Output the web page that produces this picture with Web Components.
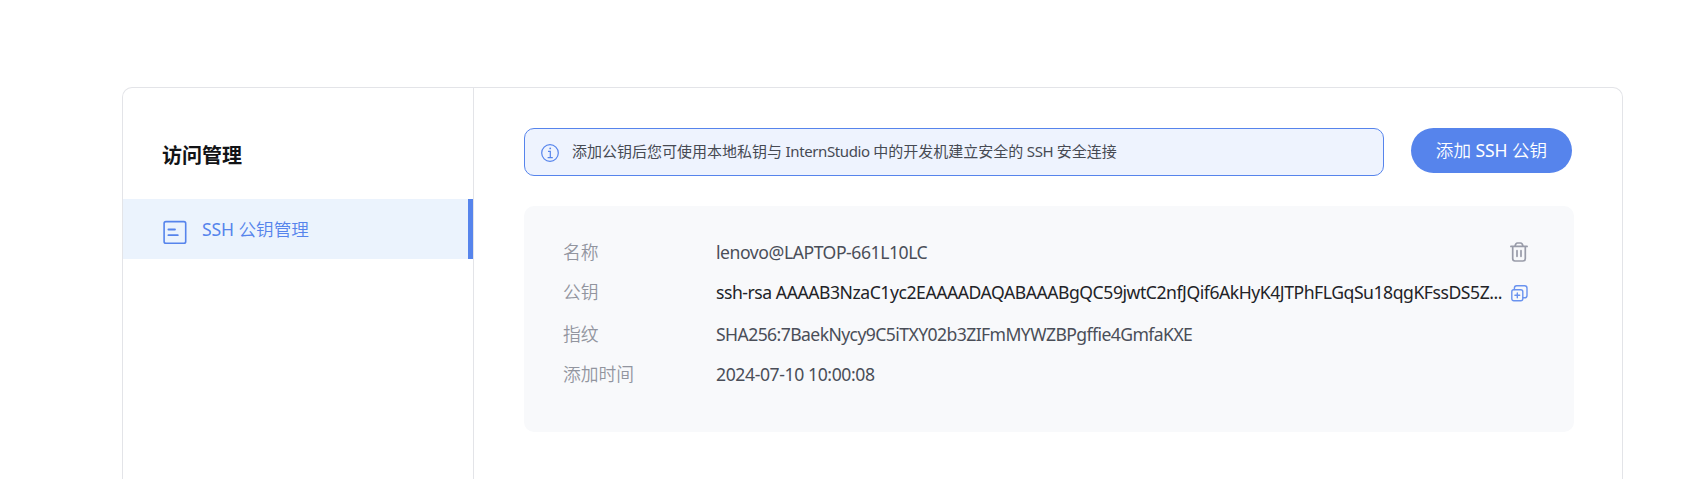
<!DOCTYPE html>
<html lang="zh-CN"><head><meta charset="utf-8"><title>SSH 公钥管理</title>
<style>
html,body{margin:0;height:479px;overflow:hidden;background:#fff}
body{font-family:"Noto Sans","Noto Sans CJK SC",sans-serif;font-size:17.6px;color:#464a53}
</style></head><body>
<access-page></access-page>
<script>
const define=(name,html)=>customElements.define(name,class extends HTMLElement{
  constructor(){super();this.attachShadow({mode:'open'}).innerHTML=html;}
});

define('icon-form',`<style>:host{display:block;width:24px;height:24px}svg{display:block}</style>
<svg width="24" height="24" viewBox="0 0 24 24" fill="none" stroke="#5684ec" stroke-width="1.6"><rect x="1.1" y="1.6" width="21.6" height="21.6" rx="1.8"/><path d="M5.4 9.5h6.6M5.4 15.2h9.4" stroke-width="1.8" stroke-linecap="round"/></svg>`);

define('icon-info',`<style>:host{display:block;width:18px;height:18px}svg{display:block}</style>
<svg width="18" height="18" viewBox="0 0 18 18" fill="none" stroke="#5684ec" stroke-width="1.2"><circle cx="9" cy="9" r="8.3"/><path d="M7 7.3h2.3v6.2M6.6 13.6h5.2"/><circle cx="9.2" cy="4.4" r=".9" fill="#5684ec" stroke="none"/></svg>`);

define('icon-trash',`<style>:host{display:block;width:18px;height:20px}svg{display:block}</style>
<svg width="18" height="20" viewBox="0 0 18 20" fill="none" stroke="#999ca9" stroke-width="1.7" stroke-linecap="round"><path d="M.9 4.4h16.2M5 4.2C5.4 2 6.2 1 7.4 1h3.2c1.2 0 2 1 2.4 3.2M2.7 4.6v12c0 1.5.8 2.4 2.3 2.4h8c1.5 0 2.3-.9 2.3-2.4v-12M7 8.7v5.6M11 8.7v5.6"/></svg>`);

define('icon-copy',`<style>:host{display:block;width:17px;height:17px}svg{display:block}</style>
<svg width="17" height="17" viewBox="0 0 17 17" fill="none" stroke="#6a93ef" stroke-width="1.4" stroke-linecap="round"><rect x=".8" y="4.8" width="11" height="11" rx="2"/><path d="M3.4 4.6V3C3.4 1.6 4.2.8 5.6.8h8c1.6 0 2.4.8 2.4 2.4v7.2c0 1.6-.8 2.4-2.4 2.4H12M6.3 7.9v4.8M3.9 10.3h4.8"/></svg>`);

define('side-nav',`<style>
:host{display:flex;flex-direction:column;width:351px;flex:none;box-sizing:border-box;border-right:1px solid #e3e4e8}
h1{margin:50px 0 0 39px;font-size:20px;line-height:36px;height:36px;font-weight:700;color:#121316}
</style><h1>访问管理</h1><slot></slot>`);

define('nav-item',`<style>
:host{display:flex;align-items:center;margin-top:25px;height:60px;box-sizing:border-box;padding-left:40px;background:#ebf3fd;border-right:5px solid #5684ec;color:#5684ec;font-weight:350}
icon-form{margin:6px 15px 0 0}
span{line-height:26px;white-space:nowrap}
</style><icon-form></icon-form><span><slot></slot></span>`);

define('info-tip',`<style>
:host{display:flex;align-items:center;width:860px;height:48px;box-sizing:border-box;border:1px solid #5684ec;border-radius:10px;background:#eef3fe;padding-left:16px;font-size:15px}
icon-info{margin:2px 13px 0 0}
span{line-height:24px;margin-top:-2px;white-space:nowrap}
</style><icon-info></icon-info><span><slot></slot></span>`);

define('pill-button',`<style>
:host{display:block}
button{display:block;width:161px;height:45px;padding:0 0 2px;border:0;border-radius:23px;background:#5684ec;color:#fff;font:inherit;font-weight:350;white-space:nowrap}
</style><button><slot></slot></button>`);

define('key-row',`<style>
:host{display:flex;align-items:center;height:40px}
.label{width:153px;flex:none;color:#92959f;font-size:17.8px;letter-spacing:0;font-weight:350;padding-bottom:2px}
.value{white-space:nowrap}
.end{margin-left:auto;flex:none}
</style><span class="label"><slot name="label"></slot></span><span class="value"><slot></slot></span><span class="end"><slot name="action"></slot></span>`);

define('key-card',`<style>
:host{display:block;margin-top:30px;width:1050px;height:226px;box-sizing:border-box;border-radius:10px;background:#f8f9fb;padding:26px 46px 0 39px}
.name{color:#4a4e58;letter-spacing:-.45px}
.key{color:#222327;letter-spacing:-.46px}
.print{height:43px;color:#4a4e58;letter-spacing:-.59px}
.time{height:38px;color:#4a4e58;letter-spacing:-.4px}
icon-trash{margin-top:-1px}
icon-copy{margin-top:3px}
</style>
<key-row class="name"><span slot="label">名称</span><span>lenovo@LAPTOP-661L10LC</span><icon-trash slot="action"></icon-trash></key-row>
<key-row class="key"><span slot="label">公钥</span><span>ssh-rsa AAAAB3NzaC1yc2EAAAADAQABAAABgQC59jwtC2nfJQif6AkHyK4JTPhFLGqSu18qgKFssDS5Z...</span><icon-copy slot="action"></icon-copy></key-row>
<key-row class="print"><span slot="label">指纹</span><span>SHA256:7BaekNycy9C5iTXY02b3ZIFmMYWZBPgffie4GmfaKXE</span></key-row>
<key-row class="time"><span slot="label">添加时间</span><span>2024-07-10 10:00:08</span></key-row>`);

define('access-page',`<style>
:host{display:block;padding:87px 0 0 122px}
.panel{display:flex;width:1501px;height:392px;box-sizing:border-box;border:1px solid #e3e4e8;border-bottom:0;border-radius:10px 10px 0 0}
main{padding:40px 0 0 50px}
.bar{display:flex;gap:27px;align-items:flex-start}
.latin{letter-spacing:-.38px}
.abbr{font-weight:400;letter-spacing:-.15px}
</style><div class="panel"><side-nav><nav-item><span class="abbr">SSH</span> 公钥管理</nav-item></side-nav>
<main><div class="bar"><info-tip>添加公钥后您可使用本地私钥与<span class="latin"> InternStudio </span>中的开发机建立安全的<span class="latin"> SSH </span>安全连接</info-tip><pill-button>添加 <span class="abbr">SSH</span> 公钥</pill-button></div><key-card></key-card></main></div>`);
</script></body></html>
